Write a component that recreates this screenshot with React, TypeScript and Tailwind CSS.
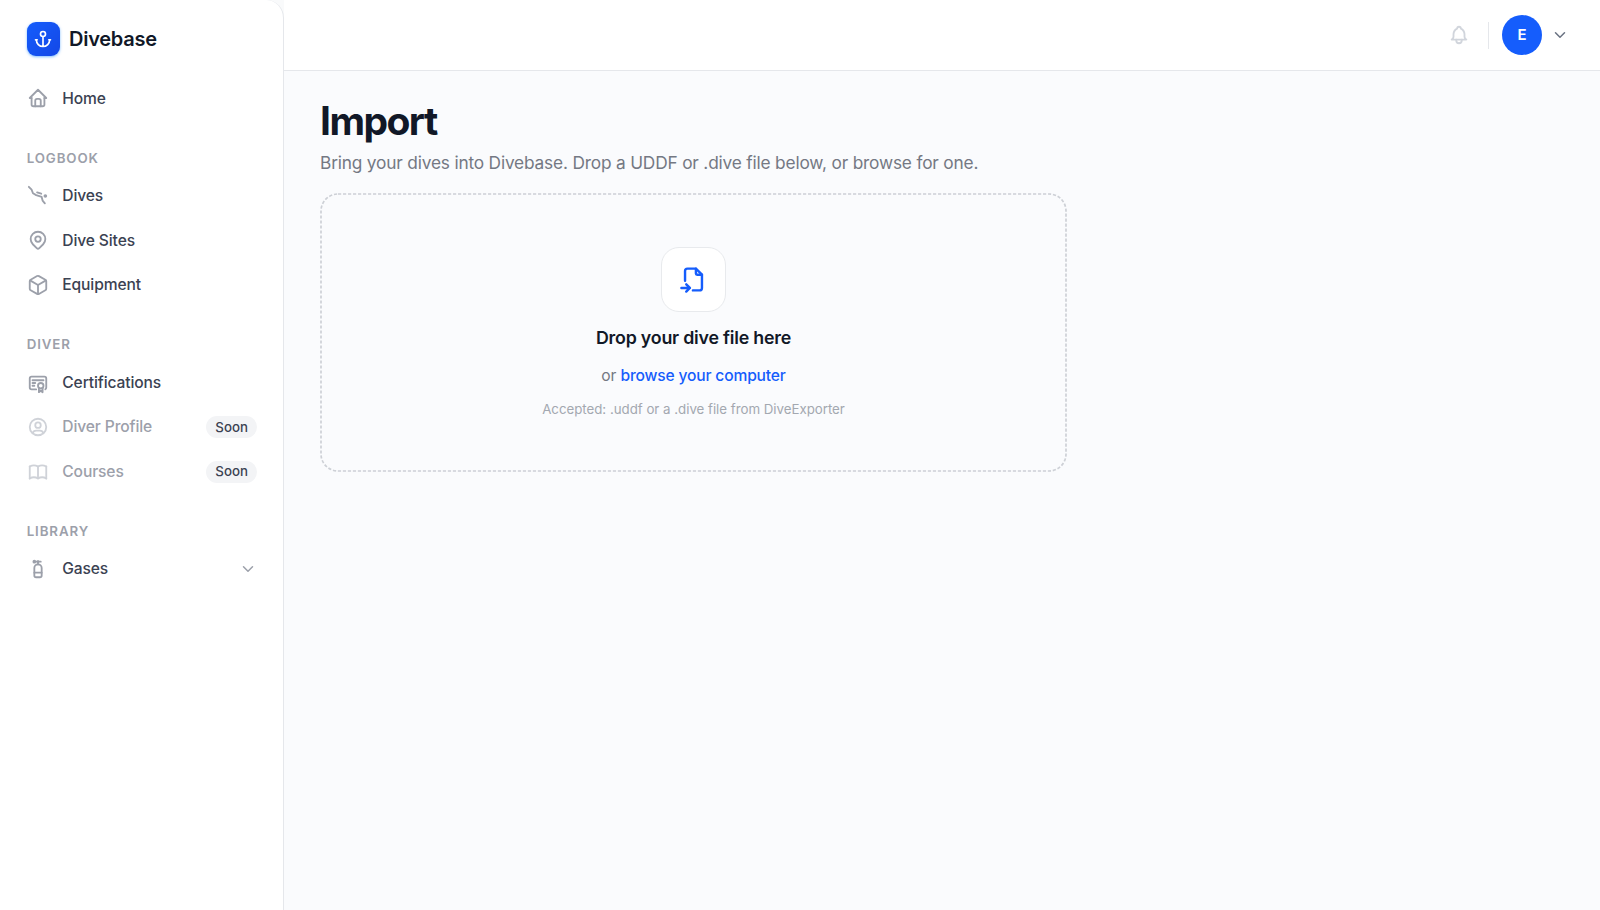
import type { ReactNode } from "react";
import { Box } from "lucide-react";
import {
  TbAnchor, TbBell, TbBook, TbCertificate, TbChevronDown, TbFileImport, TbHome,
  TbMapPin, TbScubaDiving, TbScubaDivingTank, TbUserCircle,
} from "react-icons/tb";

type ItemProps = { icon: ReactNode; label: string; soon?: boolean; expandable?: boolean };

function Item({ icon, label, soon, expandable }: ItemProps) {
  return (
    <a className={`flex h-[44.500px] items-center pr-[26px] pl-[26.700px] ${soon ? "text-[#9ca0aa]" : "text-[#3b4252]"}`}>
      <span className={soon ? "text-[#cfd2d8]" : "text-[#9ca0aa]"}>{icon}</span>
      <span className="ml-[13.600px] flex-1 text-[15.600px] font-medium tracking-[-0.120px]">{label}</span>
      {soon && (
        <span className="flex h-[22px] items-center rounded-full bg-[#f3f4f6] px-[9px] pt-px text-[13.300px] font-medium text-[#3b4252]">Soon</span>
      )}
      {expandable && <TbChevronDown className="size-[18px] text-[#9ca0aa]" />}
    </a>
  );
}

function Section({ title, children }: { title: string; children: ReactNode }) {
  return (
    <section className="mt-[26.100px]">
      <h2 className="flex h-[27px] items-center pb-[3px] pl-[26.700px] text-[13.300px] font-semibold tracking-[0.900px] text-[#9ca0aa]">{title}</h2>
      {children}
    </section>
  );
}

const ic = "size-[22px]";

export default function App() {
  return (
    <div className="flex h-[910px] w-full overflow-hidden bg-[#fafbfd] font-['Inter',sans-serif] antialiased">
      <div className="w-[284px] shrink-0 bg-[#f9fafb]">
        <aside className="h-full rounded-tr-[18px] border-r border-[#e5e7eb] bg-white">
          <div className="flex h-[76.100px] items-center gap-[9px] pt-[2px] pl-[26.700px]">
            <div className="flex size-[33.300px] items-center justify-center rounded-[9px] bg-[#155dfc] bg-linear-to-br from-[#155dfc] to-[#1447e6] text-white shadow-sm shadow-blue-300">
              <TbAnchor className="size-[20px]" />
            </div>
            <span className="text-[20px] font-semibold tracking-[-0.250px] text-[#111827]">Divebase</span>
          </div>
          <nav>
            <Item icon={<TbHome className={ic} />} label="Home" />
            <Section title="LOGBOOK">
              <Item icon={<TbScubaDiving className={ic} />} label="Dives" />
              <Item icon={<TbMapPin className={ic} />} label="Dive Sites" />
              <Item icon={<Box className={ic} strokeWidth={2} />} label="Equipment" />
            </Section>
            <Section title="DIVER">
              <Item icon={<TbCertificate className={ic} />} label="Certifications" />
              <Item icon={<TbUserCircle className={ic} />} label="Diver Profile" soon />
              <Item icon={<TbBook className={ic} />} label="Courses" soon />
            </Section>
            <Section title="LIBRARY">
              <Item icon={<TbScubaDivingTank className={ic} />} label="Gases" expandable />
            </Section>
          </nav>
        </aside>
      </div>
      <div className="flex flex-1 flex-col">
        <header className="flex h-[71px] items-center justify-end border-b border-[#e5e7eb] bg-white pr-[31px]">
          <TbBell className="size-[22px] text-[#d1d5dc]" />
          <div className="mr-[13px] ml-[18px] h-[27px] w-px bg-[#e5e7eb]" />
          <div className="flex size-[40px] items-center justify-center rounded-full bg-[#155dfc] pt-px text-[15px] font-semibold text-white">E</div>
          <TbChevronDown className="ml-[9px] size-[18px] text-[#6a7282]" />
        </header>
        <main className="px-[36px] pt-[28px]">
          <h1 className="text-[39px] leading-[44px] font-bold tracking-[-1.550px] text-[#111827]">Import</h1>
          <p className="mt-[6px] text-[17.300px] leading-[28px] tracking-[-0.180px] text-[#747883]">
            Bring your dives into Divebase. Drop a UDDF or .dive file below, or browse for one.
          </p>
          <div className="relative mt-[16px] flex h-[279px] w-[747px] flex-col items-center pt-[54px]">
            <svg className="absolute inset-0 size-full" fill="none" aria-hidden="true">
              <rect x="1" y="1" width="745" height="277" rx="17" stroke="#cdd0d6" strokeWidth="1.700" strokeDasharray="3.200 1.800" />
            </svg>
            <div className="flex size-[65px] items-center justify-center rounded-[18px] border border-[#e8eaed] bg-white text-[#155dfc]">
              <TbFileImport className="size-[29px]" />
            </div>
            <p className="mt-[12px] text-[17.800px] leading-[27px] font-semibold tracking-[-0.210px] text-[#111827]">Drop your dive file here</p>
            <p className="mt-[13px] text-[15.600px] leading-[24px] tracking-[-0.160px] text-[#747883]">
              or <span className="font-medium text-[#155dfc]">browse your computer</span>
            </p>
            <p className="mt-[11px] text-[13.300px] leading-[20px] tracking-[-0.020px] text-[#a3a8b0]">Accepted: .uddf or a .dive file from DiveExporter</p>
          </div>
        </main>
      </div>
    </div>
  );
}
